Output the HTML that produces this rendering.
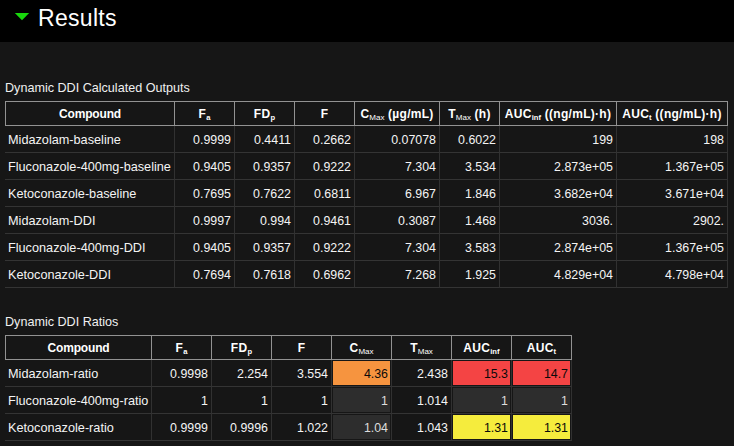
<!DOCTYPE html>
<html><head><meta charset="utf-8"><title>Results</title>
<style>
html,body{margin:0;padding:0;background:#161616;}
body{width:734px;height:446px;overflow:hidden;position:relative;font-family:"Liberation Sans",sans-serif;color:#fff;}
.hdr{position:absolute;left:0;top:0;width:734px;height:42px;background:#000;}
.tri{position:absolute;left:0;top:0;}
.title{position:absolute;left:38px;top:4px;font-size:23px;letter-spacing:.3px;line-height:28px;color:#fff;white-space:nowrap;}
.cap{position:absolute;left:5px;font-size:12.6px;line-height:16px;color:#f0f0f0;white-space:nowrap;}
.tbl{position:absolute;font-size:12.7px;}
.tr{position:absolute;left:0;width:100%;}
.hr{top:0;height:25px;}
.dr{height:27px;}
.th{position:absolute;top:0;height:25px;box-sizing:border-box;border:1px solid #929292;font-weight:bold;font-size:12px;letter-spacing:.28px;text-align:center;line-height:23px;padding-top:1px;white-space:nowrap;color:#fff;}
.td{position:absolute;top:0;height:27px;box-sizing:border-box;border-right:1px solid #313131;border-bottom:1px solid #343434;text-align:right;font-size:12.4px;padding-right:3px;padding-top:1px;line-height:26px;white-space:nowrap;color:#f4f4f4;}
.td.first{text-align:left;font-size:12.7px;padding-left:3px;padding-right:0;}
.td.hl::before{content:"";position:absolute;left:1px;top:1px;right:1px;bottom:1px;z-index:0;}
.td.hl span{position:relative;z-index:1;}
.td.o::before{background:#f6943f;} .td.r::before{background:#f44444;} .td.y::before{background:#f5ec3d;} .td.g::before{background:#2d2d2d;}
.td.o,.td.r,.td.y{color:#0a0a0a;} .td.g{color:#ddd;}
.th.c0 span{letter-spacing:-.15px}
sub{letter-spacing:.1px;font-size:7.6px;font-weight:bold;color:#fff;vertical-align:baseline;position:relative;top:2px;line-height:0;}
sub.m{font-weight:normal;font-size:8px;letter-spacing:0;}
</style></head><body>
<div class="hdr"><svg class="tri" width="40" height="30" viewBox="0 0 40 30"><polygon points="14.8,13 29.2,13 22,20.2" fill="#18d80c"/></svg><div class="title">Results</div></div>
<div class="cap" style="top:80px">Dynamic DDI Calculated Outputs</div>
<div class="tbl" id="t1" style="left:5px;top:101px;width:723px">
<div class="tr hr">
<div class="th c0" style="left:0px;width:170px"><span>Compound</span></div>
<div class="th c1" style="left:169px;width:61px"><span>F<sub>a</sub></span></div>
<div class="th c2" style="left:229px;width:61px"><span>FD<sub>p</sub></span></div>
<div class="th c3" style="left:289px;width:61px"><span>F</span></div>
<div class="th c4" style="left:349px;width:86px"><span>C<sub class="m">Max</sub> (µg/mL)</span></div>
<div class="th c5" style="left:434px;width:61px"><span>T<sub class="m">Max</sub> (h)</span></div>
<div class="th c6" style="left:494px;width:118px"><span>AUC<sub>inf</sub> ((ng/mL)·h)</span></div>
<div class="th c7" style="left:611px;width:112px"><span>AUC<sub>t</sub> ((ng/mL)·h)</span></div>
</div>
<div class="tr dr" style="top:25px">
<div class="td first" style="left:0px;width:170px"><span>Midazolam-baseline</span></div>
<div class="td" style="left:170px;width:60px"><span>0.9999</span></div>
<div class="td" style="left:230px;width:60px"><span>0.4411</span></div>
<div class="td" style="left:290px;width:60px"><span>0.2662</span></div>
<div class="td" style="left:350px;width:85px"><span>0.07078</span></div>
<div class="td" style="left:435px;width:60px"><span>0.6022</span></div>
<div class="td" style="left:495px;width:117px"><span>199</span></div>
<div class="td" style="left:612px;width:111px"><span>198</span></div>
</div>
<div class="tr dr" style="top:52px">
<div class="td first" style="left:0px;width:170px"><span>Fluconazole-400mg-baseline</span></div>
<div class="td" style="left:170px;width:60px"><span>0.9405</span></div>
<div class="td" style="left:230px;width:60px"><span>0.9357</span></div>
<div class="td" style="left:290px;width:60px"><span>0.9222</span></div>
<div class="td" style="left:350px;width:85px"><span>7.304</span></div>
<div class="td" style="left:435px;width:60px"><span>3.534</span></div>
<div class="td" style="left:495px;width:117px"><span>2.873e+05</span></div>
<div class="td" style="left:612px;width:111px"><span>1.367e+05</span></div>
</div>
<div class="tr dr" style="top:79px">
<div class="td first" style="left:0px;width:170px"><span>Ketoconazole-baseline</span></div>
<div class="td" style="left:170px;width:60px"><span>0.7695</span></div>
<div class="td" style="left:230px;width:60px"><span>0.7622</span></div>
<div class="td" style="left:290px;width:60px"><span>0.6811</span></div>
<div class="td" style="left:350px;width:85px"><span>6.967</span></div>
<div class="td" style="left:435px;width:60px"><span>1.846</span></div>
<div class="td" style="left:495px;width:117px"><span>3.682e+04</span></div>
<div class="td" style="left:612px;width:111px"><span>3.671e+04</span></div>
</div>
<div class="tr dr" style="top:106px">
<div class="td first" style="left:0px;width:170px"><span>Midazolam-DDI</span></div>
<div class="td" style="left:170px;width:60px"><span>0.9997</span></div>
<div class="td" style="left:230px;width:60px"><span>0.994</span></div>
<div class="td" style="left:290px;width:60px"><span>0.9461</span></div>
<div class="td" style="left:350px;width:85px"><span>0.3087</span></div>
<div class="td" style="left:435px;width:60px"><span>1.468</span></div>
<div class="td" style="left:495px;width:117px"><span>3036.</span></div>
<div class="td" style="left:612px;width:111px"><span>2902.</span></div>
</div>
<div class="tr dr" style="top:133px">
<div class="td first" style="left:0px;width:170px"><span>Fluconazole-400mg-DDI</span></div>
<div class="td" style="left:170px;width:60px"><span>0.9405</span></div>
<div class="td" style="left:230px;width:60px"><span>0.9357</span></div>
<div class="td" style="left:290px;width:60px"><span>0.9222</span></div>
<div class="td" style="left:350px;width:85px"><span>7.304</span></div>
<div class="td" style="left:435px;width:60px"><span>3.583</span></div>
<div class="td" style="left:495px;width:117px"><span>2.874e+05</span></div>
<div class="td" style="left:612px;width:111px"><span>1.367e+05</span></div>
</div>
<div class="tr dr" style="top:160px">
<div class="td first" style="left:0px;width:170px"><span>Ketoconazole-DDI</span></div>
<div class="td" style="left:170px;width:60px"><span>0.7694</span></div>
<div class="td" style="left:230px;width:60px"><span>0.7618</span></div>
<div class="td" style="left:290px;width:60px"><span>0.6962</span></div>
<div class="td" style="left:350px;width:85px"><span>7.268</span></div>
<div class="td" style="left:435px;width:60px"><span>1.925</span></div>
<div class="td" style="left:495px;width:117px"><span>4.829e+04</span></div>
<div class="td" style="left:612px;width:111px"><span>4.798e+04</span></div>
</div>
</div>
<div class="cap" style="top:314px">Dynamic DDI Ratios</div>
<div class="tbl" id="t2" style="left:5px;top:335px;width:567px">
<div class="tr hr">
<div class="th c0" style="left:0px;width:147px"><span>Compound</span></div>
<div class="th c1" style="left:146px;width:61px"><span>F<sub>a</sub></span></div>
<div class="th c2" style="left:206px;width:61px"><span>FD<sub>p</sub></span></div>
<div class="th c3" style="left:266px;width:61px"><span>F</span></div>
<div class="th c4" style="left:326px;width:61px"><span>C<sub class="m">Max</sub></span></div>
<div class="th c5" style="left:386px;width:61px"><span>T<sub class="m">Max</sub></span></div>
<div class="th c6" style="left:446px;width:61px"><span>AUC<sub>inf</sub></span></div>
<div class="th c7" style="left:506px;width:61px"><span>AUC<sub>t</sub></span></div>
</div>
<div class="tr dr" style="top:25px">
<div class="td first" style="left:0px;width:147px"><span>Midazolam-ratio</span></div>
<div class="td" style="left:147px;width:60px"><span>0.9998</span></div>
<div class="td" style="left:207px;width:60px"><span>2.254</span></div>
<div class="td" style="left:267px;width:60px"><span>3.554</span></div>
<div class="td hl o" style="left:327px;width:60px"><span>4.36</span></div>
<div class="td" style="left:387px;width:60px"><span>2.438</span></div>
<div class="td hl r" style="left:447px;width:60px"><span>15.3</span></div>
<div class="td hl r" style="left:507px;width:60px"><span>14.7</span></div>
</div>
<div class="tr dr" style="top:52px">
<div class="td first" style="left:0px;width:147px"><span>Fluconazole-400mg-ratio</span></div>
<div class="td" style="left:147px;width:60px"><span>1</span></div>
<div class="td" style="left:207px;width:60px"><span>1</span></div>
<div class="td" style="left:267px;width:60px"><span>1</span></div>
<div class="td hl g" style="left:327px;width:60px"><span>1</span></div>
<div class="td" style="left:387px;width:60px"><span>1.014</span></div>
<div class="td hl g" style="left:447px;width:60px"><span>1</span></div>
<div class="td hl g" style="left:507px;width:60px"><span>1</span></div>
</div>
<div class="tr dr" style="top:79px">
<div class="td first" style="left:0px;width:147px"><span>Ketoconazole-ratio</span></div>
<div class="td" style="left:147px;width:60px"><span>0.9999</span></div>
<div class="td" style="left:207px;width:60px"><span>0.9996</span></div>
<div class="td" style="left:267px;width:60px"><span>1.022</span></div>
<div class="td hl g" style="left:327px;width:60px"><span>1.04</span></div>
<div class="td" style="left:387px;width:60px"><span>1.043</span></div>
<div class="td hl y" style="left:447px;width:60px"><span>1.31</span></div>
<div class="td hl y" style="left:507px;width:60px"><span>1.31</span></div>
</div>
</div>
</body></html>
